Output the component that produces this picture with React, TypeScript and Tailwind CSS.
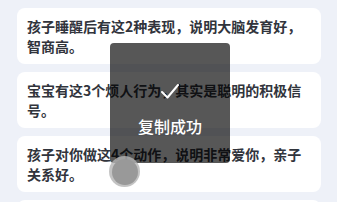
import React from 'react';

const items = [
    '孩子睡醒后有这2种表现，说明大脑发育好，智商高。',
    '宝宝有这3个烦人行为，其实是聪明的积极信号。',
    '孩子对你做这4个动作，说明非常爱你，亲子关系好。',
    '宝宝这样睡觉，长大更聪明。',
];

export default function App() {
    return (
        <div
            className="relative h-[202px] w-[337px] overflow-hidden bg-[#eef1f8]"
            style={{ fontFamily: '"Noto Sans CJK SC", "Noto Sans", sans-serif' }}
        >
            {/* List */}
            <div className="flex flex-col gap-2 pt-2 pl-[17px]">
                {items.map((text) => (
                    <div key={text} className="w-[304px] h-[56px] shrink-0 rounded-lg bg-white px-[10px] py-2">
                        <p className="text-[14px] leading-[20px] font-bold text-[#31343c]">{text}</p>
                    </div>
                ))}
            </div>

            {/* Toast */}
            <div className="absolute left-[110px] top-[43px] flex h-[120px] w-[120px] flex-col items-center rounded-[4px] bg-black/[0.66]">
                <svg className="mt-[41px]" width="18" height="15" viewBox="0 0 18 15" fill="none">
                    <path d="M1 8 L6.5 13.5 L17 1" stroke="white" strokeWidth="2" strokeLinecap="round" strokeLinejoin="round" />
                </svg>
                <span className="mt-[17px] text-[16px] leading-[20px] font-medium text-white">复制成功</span>
            </div>

            {/* Touch indicator */}
            <div className="absolute left-[109px] top-[156px] flex h-[31px] w-[31px] items-center justify-center rounded-full bg-[#b4b4b4]/80">
                <div className="h-[26px] w-[26px] rounded-full bg-[#999999]" />
            </div>
        </div>
    );
}
